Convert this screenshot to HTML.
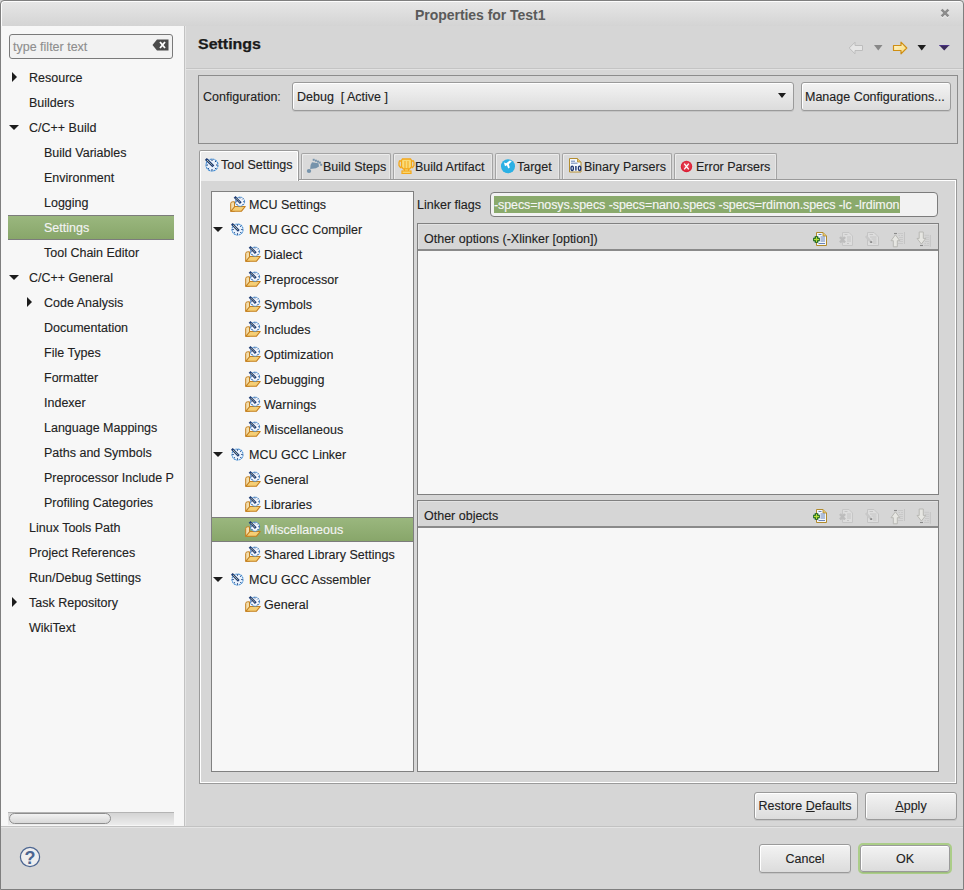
<!DOCTYPE html>
<html><head><meta charset="utf-8">
<style>
*{box-sizing:border-box}
html,body{margin:0;padding:0}
body{width:964px;height:890px;overflow:hidden;position:relative;background:#d6d6d6;font-family:"Liberation Sans",sans-serif;font-size:12.5px;color:#222222;-webkit-text-stroke:0.12px currentColor}
.a{position:absolute}
.t{position:absolute;white-space:pre;line-height:27px;height:27px}
#frame{left:0;top:0;width:964px;height:890px;border:1px solid #7f7f7f;border-radius:4px 4px 0 0;pointer-events:none}
#title{left:1px;top:1px;width:962px;height:25px;background:linear-gradient(#e6e6e6,#d4d4d4);border-radius:3px 3px 0 0;border-top:1px solid #fdfdfd;border-left:1px solid #fdfdfd}
#left{left:1px;top:26px;width:183px;height:800px;background:#f7f7f7}
#leftedge{left:184px;top:26px;width:2px;height:800px;border-left:1px solid #c2c2c2;background:#e4e4e4}
.sel{background:linear-gradient(#9ab77e,#88a66a);border-top:1px solid #7c7c7c;border-bottom:1px solid #7c7c7c}
.arR{position:absolute;width:0;height:0;border-top:5px solid transparent;border-bottom:5px solid transparent;border-left:5px solid #1c1c1c}
.arD{position:absolute;width:0;height:0;border-left:5.5px solid transparent;border-right:5.5px solid transparent;border-top:5.5px solid #1c1c1c}
.btn{position:absolute;border:1px solid #9a9a9a;border-radius:3px;background:linear-gradient(#f3f3f3,#dcdcdc);box-shadow:inset 1px 1px 0 #fff, 0 1px 0 rgba(0,0,0,0.08);text-align:center;white-space:pre}
.tab{position:absolute;top:153px;height:26px;border:1px solid #a4a4a4;border-bottom:none;border-radius:2px 2px 0 0;background:#dadada;box-shadow:inset 1px 1px 0 #ececec, inset -1px 0 0 #e6e6e6}
.tab span{position:absolute;top:3px;line-height:18px;white-space:pre}
.box{position:absolute;border:1px solid #808080}
</style></head><body>

<svg width="0" height="0" style="position:absolute">
<defs>
<symbol id="gear" viewBox="0 0 14 14">
 <circle cx="7" cy="7" r="6" fill="#eaf2fc" stroke="#3d8ad2" stroke-width="1.1" stroke-dasharray="2.2 0.6"/>
 <path d="M7 1.4V3M7 11V12.6M1.4 7H3M11 7H12.6M3.1 10.9l1-1M10.9 10.9l-1-1M10.9 3.1l-1 1" stroke="#1d3c76" stroke-width="1"/>
 <path d="M0.9 0.9L8.4 8.4" stroke="#1d3c76" stroke-width="2.7"/>
 <path d="M2.2 2.2L7.3 7.3" stroke="#f4eaa8" stroke-width="1" stroke-dasharray="1.1 0.5"/>
</symbol>
<symbol id="fgear" viewBox="0 0 16 16">
 <path d="M0.7 15.3V7.6Q0.7 5.8 2.6 5.8H4.5V15.3Z" fill="#f4dfae" stroke="#c47f1e" stroke-width="1"/>
 <path d="M0.8 15.3L4.8 10.5H15.3L11.3 15.3Z" fill="#f6cf75" stroke="#c47f1e" stroke-width="1.1" stroke-linejoin="round"/>
 <circle cx="10" cy="5.7" r="4.6" fill="#f2f6fc" stroke="#3d8ad2" stroke-width="1" stroke-dasharray="1.8 0.6"/>
 <path d="M10 1.3V2.5M14.4 5.7H13.2M5.6 5.7H6.8M6.9 8.8l0.8-0.8M13.1 8.8l-0.8-0.8M13.1 2.6l-0.8 0.8" stroke="#1d3c76" stroke-width="0.9"/>
 <path d="M4.6 0.9L10.8 7.1" stroke="#1d3c76" stroke-width="2.5"/>
 <path d="M5.8 2.1L10 6.3" stroke="#f4eaa8" stroke-width="0.9" stroke-dasharray="1 0.5"/>
</symbol>
<symbol id="doc" viewBox="0 0 14 14">
 <path d="M3.5 0.5H9.5L13.5 4.5V13.5H3.5Z" fill="#f3f6fb" stroke="#b08a2c" stroke-width="1"/>
 <path d="M9.5 0.5V4.5H13.5" fill="#e6c36c" stroke="#b08a2c" stroke-width="0.8"/>
 <path d="M5 3.5H8.5M5.5 6H12M5.5 8H12M5.5 10H12M5 12H12" stroke="#6a85b8" stroke-width="0.9"/>
</symbol>
</defs></svg>
<div id="title" class="a"></div>
<div class="a" style="left:415px;top:7px;font-weight:bold;font-size:14px;letter-spacing:-0.04px;color:#5a5a5a;-webkit-text-stroke:0;line-height:16px;white-space:pre">Properties for Test1</div>
<svg class="a" style="left:939px;top:7px" width="12" height="13"><path d="M2.6 2.6L9.4 9.4M9.4 2.6L2.6 9.4" stroke="#f2f2f2" stroke-width="2.6" transform="translate(0,1)"/><path d="M2.6 2.6L9.4 9.4M9.4 2.6L2.6 9.4" stroke="#8c8c8c" stroke-width="2.6"/></svg>

<div id="left" class="a"></div>
<div id="leftedge" class="a"></div>

<!-- filter box -->
<div class="a" style="left:9px;top:34px;width:164px;height:25px;border:1px solid #7a7a7a;border-radius:3px;background:#f2f2f2"></div>
<div class="t" style="left:13px;top:34px;color:#8e8e8e">type filter text</div>
<svg class="a" style="left:152px;top:39px" width="17" height="12"><path d="M5 0.5H16.5V11.5H5L0.5 6Z" fill="#4a4a4a"/><path d="M8 3L13 9M13 3L8 9" stroke="#fff" stroke-width="1.8"/></svg>

<!-- left tree -->
<div id="ltree">
<div class="a sel" style="left:8px;top:215px;width:166px;height:25px"></div>
<div class="arR" style="left:12px;top:72px"></div>
<div class="t" style="left:29px;top:65px">Resource</div>
<div class="t" style="left:29px;top:90px">Builders</div>
<div class="arD" style="left:9px;top:125px"></div>
<div class="t" style="left:29px;top:115px">C/C++ Build</div>
<div class="t" style="left:44px;top:140px">Build Variables</div>
<div class="t" style="left:44px;top:165px">Environment</div>
<div class="t" style="left:44px;top:190px">Logging</div>
<div class="t" style="left:44px;top:215px;color:#f4f4f4">Settings</div>
<div class="t" style="left:44px;top:240px">Tool Chain Editor</div>
<div class="arD" style="left:9px;top:275px"></div>
<div class="t" style="left:29px;top:265px">C/C++ General</div>
<div class="arR" style="left:27px;top:297px"></div>
<div class="t" style="left:44px;top:290px">Code Analysis</div>
<div class="t" style="left:44px;top:315px">Documentation</div>
<div class="t" style="left:44px;top:340px">File Types</div>
<div class="t" style="left:44px;top:365px">Formatter</div>
<div class="t" style="left:44px;top:390px">Indexer</div>
<div class="t" style="left:44px;top:415px">Language Mappings</div>
<div class="t" style="left:44px;top:440px">Paths and Symbols</div>
<div class="t" style="left:44px;top:465px;width:130px;overflow:hidden">Preprocessor Include Paths</div>
<div class="t" style="left:44px;top:490px">Profiling Categories</div>
<div class="t" style="left:29px;top:515px">Linux Tools Path</div>
<div class="t" style="left:29px;top:540px">Project References</div>
<div class="t" style="left:29px;top:565px">Run/Debug Settings</div>
<div class="arR" style="left:12px;top:597px"></div>
<div class="t" style="left:29px;top:590px">Task Repository</div>
<div class="t" style="left:29px;top:615px">WikiText</div>
</div>

<!-- left scrollbar -->
<div class="a" style="left:8px;top:812px;width:166px;height:13px;border-top:1px solid #b4b4b4;background:linear-gradient(#d4d4d4,#ececec)"></div>
<div class="a" style="left:9px;top:813px;width:102px;height:11px;border:1px solid #8e8e8e;border-radius:6px;background:linear-gradient(#f2f2f2,#d8d8d8)"></div>

<!-- bottom separator -->
<div class="a" style="left:1px;top:826px;width:962px;height:1px;background:#c2c2c2"></div>
<div class="a" style="left:1px;top:827px;width:962px;height:1px;background:#e4e4e4"></div>

<!-- right header -->
<div class="a" style="left:198px;top:34px;font-weight:bold;font-size:14px;line-height:20px;color:#1a1a1a;transform:scaleX(1.14);transform-origin:0 0;-webkit-text-stroke:0.25px #1a1a1a">Settings</div>
<div class="a" style="left:186px;top:68px;width:777px;height:1px;background:#c4c4c4"></div>
<div class="a" style="left:186px;top:69px;width:777px;height:1px;background:#e3e3e3"></div>

<!-- nav arrows -->
<svg class="a" style="left:848px;top:41px" width="16" height="14" viewBox="0 0 16 14"><path d="M1.2 7L7 1.2V4.5H14.5V9.5H7V12.8Z" fill="#e6e6e6" stroke="#bdbdbd" stroke-width="1" stroke-linejoin="round"/></svg>
<svg class="a" style="left:874px;top:45px" width="9" height="6" viewBox="0 0 9 6"><path d="M0 0H8.5L4.25 5.5Z" fill="#888"/></svg>
<svg class="a" style="left:892px;top:41px" width="16" height="14" viewBox="0 0 16 14"><defs><linearGradient id="yg" x1="0" y1="0" x2="1" y2="1"><stop offset="0" stop-color="#fff8d8"/><stop offset="1" stop-color="#f8d870"/></linearGradient></defs><path d="M14.8 7L9 1.2V4.5H1.5V9.5H9V12.8Z" fill="url(#yg)" stroke="#cf8e12" stroke-width="1.2" stroke-linejoin="round"/></svg>
<svg class="a" style="left:917px;top:45px" width="10" height="6" viewBox="0 0 10 6"><path d="M0.5 0H9L4.75 5.5Z" fill="#1e1e1e"/></svg>
<svg class="a" style="left:939px;top:45px" width="11" height="6" viewBox="0 0 11 6"><path d="M0 0H10.5L5.25 5.5Z" fill="#3a2a5a"/><path d="M0 0H10.5" stroke="#5a3ab0" stroke-width="1"/></svg>
<!-- config group -->
<div class="box" style="left:198px;top:75px;width:760px;height:69px;border-color:#8c8c8c"></div>
<div class="t" style="left:203px;top:84px">Configuration:</div>
<div class="btn" style="left:292px;top:82px;width:502px;height:29px"></div>
<div class="t" style="left:297px;top:84px">Debug  [ Active ]</div>
<div class="arD" style="left:778px;top:93px;border-left-width:4.6px;border-right-width:4.6px;border-top-width:5.8px"></div>
<div class="btn" style="left:801px;top:82px;width:150px;height:29px"></div>
<div class="t" style="left:805px;top:84px">Manage Configurations...</div>

<!-- tabs -->
<div class="a" style="left:199px;top:179px;width:758px;height:605px;border:1px solid #9a9a9a;box-shadow:inset 1px 1px 0 #fff, inset -1px -1px 0 #fff"></div>
<div class="tab" style="left:301px;width:90px"></div>
<div class="tab" style="left:393px;width:100px"></div>
<div class="tab" style="left:495px;width:65px"></div>
<div class="tab" style="left:562px;width:110px"></div>
<div class="tab" style="left:674px;width:103px"></div>
<div class="a" style="left:199px;top:150px;width:100px;height:31px;border:1px solid #9a9a9a;border-bottom:none;border-radius:2px 2px 0 0;background:#ececec;box-shadow:inset 1px 1px 0 #fff, inset -1px 0 0 #fff"></div>
<svg class="a" style="left:205px;top:158px" width="14" height="14"><use href="#gear"/></svg>
<div class="t" style="left:221px;top:152px">Tool Settings</div>
<svg class="a" style="left:306px;top:158px" width="17" height="16" viewBox="0 0 17 16">
 <g fill="#7693ab"><rect x="6.7" y="0.8" width="2" height="2"/><rect x="8.9" y="1.7" width="2" height="2"/><rect x="11" y="2.6" width="2" height="2"/><rect x="12.9" y="3.6" width="2" height="2"/><rect x="14.2" y="5.8" width="2" height="2"/>
 <path d="M6 4.2L12.5 5.3L13 8.5L10 10.2L4.2 11L4.6 7Z"/><ellipse cx="3" cy="13" rx="2.2" ry="1.9"/></g></svg>
<div class="t" style="left:323px;top:154px">Build Steps</div>
<svg class="a" style="left:398px;top:158px" width="17" height="16" viewBox="0 0 17 16">
 <path d="M4.5 1H12.5L13.5 2.5V9L11.5 11H5.5L3.5 9V2.5Z" fill="#f9dc7a" stroke="#f3a71a" stroke-width="1.3"/>
 <path d="M3.5 3H1.5L1 4.5V7.5L2.5 9.5H3.5M13.5 3H15.5L16 4.5V7.5L14.5 9.5H13.5" fill="none" stroke="#f3a71a" stroke-width="1.3"/>
 <path d="M7 3V10M10 3V10" stroke="#f3a71a" stroke-width="1"/>
 <rect x="6.5" y="11" width="4" height="2.5" fill="#f9dc7a" stroke="#f3a71a" stroke-width="1"/>
 <rect x="4" y="13" width="9" height="2.5" fill="#f9dc7a" stroke="#f3a71a" stroke-width="1.2"/></svg>
<div class="t" style="left:415px;top:154px">Build Artifact</div>
<svg class="a" style="left:500px;top:158px" width="16" height="16" viewBox="0 0 16 16">
 <circle cx="8" cy="8.2" r="7" fill="#2ab0e4"/>
 <path d="M4 4.6L6.2 5.2L9.8 2.6L11.8 3.2L8.8 6.2L9.8 9.6L8.3 10.6L6.9 7.3L5 8.2L4.5 6.6Z" fill="#fff"/></svg>
<div class="t" style="left:517px;top:154px">Target</div>
<svg class="a" style="left:568px;top:157px" width="16" height="16" viewBox="0 0 16 16">
 <path d="M1.5 1.5H9.5L13 5V15H1.5Z" fill="#f4f7fc" stroke="#b38d30" stroke-width="1"/>
 <path d="M9.5 1.5V5H13" fill="#e7c46a" stroke="#b38d30" stroke-width="0.8"/>
 <path d="M3 4.2H7M3 6.2H9.5" stroke="#5a78b0" stroke-width="0.9"/>
 <g fill="none" stroke="#1c3470" stroke-width="1.3"><ellipse cx="4.2" cy="11.3" rx="1.2" ry="2.2"/><ellipse cx="11.6" cy="11.3" rx="1.2" ry="2.2"/></g><rect x="7.2" y="9" width="1.4" height="4.6" fill="#1c3470"/></svg>
<div class="t" style="left:584px;top:154px">Binary Parsers</div>
<svg class="a" style="left:680px;top:160px" width="13" height="13" viewBox="0 0 13 13">
 <defs><radialGradient id="rg" cx="0.5" cy="0.45" r="0.55"><stop offset="0" stop-color="#ec5a68"/><stop offset="1" stop-color="#d9172f"/></radialGradient></defs><circle cx="6.5" cy="6.5" r="5.7" fill="url(#rg)"/>
 <path d="M4.2 3.6L8.8 9.4M8.8 3.6L4.2 9.4" stroke="#fff" stroke-width="1.3"/></svg>
<div class="t" style="left:696px;top:154px">Error Parsers</div>

<!-- inner tree -->
<div class="box" style="left:211px;top:191px;width:203px;height:581px;background:#f7f7f7"></div>
<div class="a sel" style="left:212px;top:517px;width:201px;height:25px"></div>
<svg class="a" style="left:230px;top:196px" width="16" height="16"><use href="#fgear"/></svg>
<div class="t" style="left:249px;top:192px">MCU Settings</div>
<div class="arD" style="left:213px;top:227px"></div>
<svg class="a" style="left:231px;top:223px" width="13" height="13"><use href="#gear"/></svg>
<div class="t" style="left:249px;top:217px">MCU GCC Compiler</div>
<svg class="a" style="left:245px;top:246px" width="16" height="16"><use href="#fgear"/></svg>
<div class="t" style="left:264px;top:242px">Dialect</div>
<svg class="a" style="left:245px;top:271px" width="16" height="16"><use href="#fgear"/></svg>
<div class="t" style="left:264px;top:267px">Preprocessor</div>
<svg class="a" style="left:245px;top:296px" width="16" height="16"><use href="#fgear"/></svg>
<div class="t" style="left:264px;top:292px">Symbols</div>
<svg class="a" style="left:245px;top:321px" width="16" height="16"><use href="#fgear"/></svg>
<div class="t" style="left:264px;top:317px">Includes</div>
<svg class="a" style="left:245px;top:346px" width="16" height="16"><use href="#fgear"/></svg>
<div class="t" style="left:264px;top:342px">Optimization</div>
<svg class="a" style="left:245px;top:371px" width="16" height="16"><use href="#fgear"/></svg>
<div class="t" style="left:264px;top:367px">Debugging</div>
<svg class="a" style="left:245px;top:396px" width="16" height="16"><use href="#fgear"/></svg>
<div class="t" style="left:264px;top:392px">Warnings</div>
<svg class="a" style="left:245px;top:421px" width="16" height="16"><use href="#fgear"/></svg>
<div class="t" style="left:264px;top:417px">Miscellaneous</div>
<div class="arD" style="left:213px;top:452px"></div>
<svg class="a" style="left:231px;top:448px" width="13" height="13"><use href="#gear"/></svg>
<div class="t" style="left:249px;top:442px">MCU GCC Linker</div>
<svg class="a" style="left:245px;top:471px" width="16" height="16"><use href="#fgear"/></svg>
<div class="t" style="left:264px;top:467px">General</div>
<svg class="a" style="left:245px;top:496px" width="16" height="16"><use href="#fgear"/></svg>
<div class="t" style="left:264px;top:492px">Libraries</div>
<svg class="a" style="left:245px;top:521px" width="16" height="16"><use href="#fgear"/></svg>
<div class="t" style="left:264px;top:517px;color:#f4f4f4">Miscellaneous</div>
<svg class="a" style="left:245px;top:546px" width="16" height="16"><use href="#fgear"/></svg>
<div class="t" style="left:264px;top:542px">Shared Library Settings</div>
<div class="arD" style="left:213px;top:577px"></div>
<svg class="a" style="left:231px;top:573px" width="13" height="13"><use href="#gear"/></svg>
<div class="t" style="left:249px;top:567px">MCU GCC Assembler</div>
<svg class="a" style="left:245px;top:596px" width="16" height="16"><use href="#fgear"/></svg>
<div class="t" style="left:264px;top:592px">General</div>


<!-- linker flags -->
<div class="t" style="left:417px;top:192px">Linker flags</div>
<div class="a" style="left:490px;top:192px;width:448px;height:25px;border:1px solid #7c7c7c;border-radius:4px;background:#f2f2f2"></div>
<div class="a" style="left:494px;top:196px;width:406px;height:17px;background:#8aaa6c"></div>
<div class="t" style="left:494px;top:192px;color:#f6f6f6;letter-spacing:-0.09px">-specs=nosys.specs -specs=nano.specs -specs=rdimon.specs -lc -lrdimon</div>

<!-- other options -->
<div class="box" style="left:417px;top:223px;width:522px;height:272px;background:#f7f7f7"></div>
<div class="a" style="left:418px;top:224px;width:520px;height:27px;background:#d6d6d6;border-bottom:2px solid #8a8a8a;box-shadow:inset 1px 1px 0 #e2e2e2"></div>
<div class="t" style="left:424px;top:226px">Other options (-Xlinker [option])</div>
<svg class="a" style="left:812px;top:231px" width="16" height="16" viewBox="0 0 16 16">
 <path d="M4.5 1.5H11L14.5 5V14.5H4.5Z" fill="#f3f6fb" stroke="#b08a2c" stroke-width="1"/>
 <path d="M11 1.5V5H14.5" fill="#e6c36c" stroke="#b08a2c" stroke-width="0.8"/>
 <path d="M6.5 3.5H9.5M8.5 6H13M8.5 8H13M8.5 10H13M6.5 12.5H13" stroke="#6a85b8" stroke-width="1"/>
 <path d="M4.5 5.2V11.8M1.2 8.5H7.8" stroke="#0c5a18" stroke-width="3.6"/>
 <path d="M4.5 6V11M2 8.5H7" stroke="#b5dc3a" stroke-width="1.3"/>
</svg>
<svg class="a" style="left:838px;top:231px" width="16" height="16" viewBox="0 0 16 16">
 <path d="M4.5 1.5H11L14.5 5V14.5H4.5Z" fill="#dddddd" stroke="#c6c6c6" stroke-width="1"/>
 <path d="M6.5 3.5H9.5M9 6H13M9 8H13M9 10H13M9 12.5H11" stroke="#c4c4c4" stroke-width="1"/>
 <path d="M2 6L7 11.5M7 6L2 11.5" stroke="#bdbdbd" stroke-width="2.6"/>
</svg>
<svg class="a" style="left:865px;top:231px" width="16" height="16" viewBox="0 0 16 16">
 <path d="M2.5 1.5H9L13.5 6V14.5H2.5Z" fill="#dddddd" stroke="#c4c4c4" stroke-width="1"/>
 <path d="M4.5 3.5H8M5 6H11.5M6.5 8H11.5M8 10H11.5M8 12H11.5" stroke="#c4c4c4" stroke-width="1"/>
 <path d="M0.8 5L6 11" stroke="#c8c8c8" stroke-width="2.6"/>
 <rect x="5.2" y="10.2" width="2" height="1.8" fill="#8a8a8a"/>
</svg>
<svg class="a" style="left:890px;top:231px" width="16" height="17" viewBox="0 0 16 17">
 <path d="M4 2.5H7" stroke="#8a8a8a" stroke-width="1.1"/>
 <path d="M8 2.5H13M8.5 4.5H10M11 4.5H13M9 6.5H13M9.5 8.5H13M9.5 10.5H13M8 12.5H13" stroke="#c6c6c6" stroke-width="0.9"/>
 <path d="M14.5 1V13" stroke="#c4c4c4" stroke-width="1"/>
 <path d="M5.4 3.8L1 9.7H3.3V15.8H7.3V9.7H9.8Z" fill="#e6e6e2" stroke="#b8b8b4" stroke-width="1" stroke-linejoin="round"/>
</svg>
<svg class="a" style="left:916px;top:231px" width="16" height="17" viewBox="0 0 16 17">
 <path d="M4 14.5H7" stroke="#8a8a8a" stroke-width="1.1"/>
 <path d="M8.5 4.3H13M9 6.3H13M9.5 8.4H13M9 10.5H13M8.5 12.6H10M11 12.6H13M8 14.5H13" stroke="#c6c6c6" stroke-width="0.9"/>
 <path d="M14.3 4V15.8" stroke="#c4c4c4" stroke-width="1"/>
 <path d="M5.4 13L9.8 7.4H7.3V1H3.2V7.4H1Z" fill="#e6e6e2" stroke="#b8b8b4" stroke-width="1" stroke-linejoin="round"/>
</svg>


<div class="box" style="left:417px;top:500px;width:522px;height:272px;background:#f7f7f7"></div>
<div class="a" style="left:418px;top:501px;width:520px;height:27px;background:#d6d6d6;border-bottom:2px solid #8a8a8a;box-shadow:inset 1px 1px 0 #e2e2e2"></div>
<div class="t" style="left:424px;top:503px">Other objects</div>
<svg class="a" style="left:812px;top:508px" width="16" height="16" viewBox="0 0 16 16">
 <path d="M4.5 1.5H11L14.5 5V14.5H4.5Z" fill="#f3f6fb" stroke="#b08a2c" stroke-width="1"/>
 <path d="M11 1.5V5H14.5" fill="#e6c36c" stroke="#b08a2c" stroke-width="0.8"/>
 <path d="M6.5 3.5H9.5M8.5 6H13M8.5 8H13M8.5 10H13M6.5 12.5H13" stroke="#6a85b8" stroke-width="1"/>
 <path d="M4.5 5.2V11.8M1.2 8.5H7.8" stroke="#0c5a18" stroke-width="3.6"/>
 <path d="M4.5 6V11M2 8.5H7" stroke="#b5dc3a" stroke-width="1.3"/>
</svg>
<svg class="a" style="left:838px;top:508px" width="16" height="16" viewBox="0 0 16 16">
 <path d="M4.5 1.5H11L14.5 5V14.5H4.5Z" fill="#dddddd" stroke="#c6c6c6" stroke-width="1"/>
 <path d="M6.5 3.5H9.5M9 6H13M9 8H13M9 10H13M9 12.5H11" stroke="#c4c4c4" stroke-width="1"/>
 <path d="M2 6L7 11.5M7 6L2 11.5" stroke="#bdbdbd" stroke-width="2.6"/>
</svg>
<svg class="a" style="left:865px;top:508px" width="16" height="16" viewBox="0 0 16 16">
 <path d="M2.5 1.5H9L13.5 6V14.5H2.5Z" fill="#dddddd" stroke="#c4c4c4" stroke-width="1"/>
 <path d="M4.5 3.5H8M5 6H11.5M6.5 8H11.5M8 10H11.5M8 12H11.5" stroke="#c4c4c4" stroke-width="1"/>
 <path d="M0.8 5L6 11" stroke="#c8c8c8" stroke-width="2.6"/>
 <rect x="5.2" y="10.2" width="2" height="1.8" fill="#8a8a8a"/>
</svg>
<svg class="a" style="left:890px;top:508px" width="16" height="17" viewBox="0 0 16 17">
 <path d="M4 2.5H7" stroke="#8a8a8a" stroke-width="1.1"/>
 <path d="M8 2.5H13M8.5 4.5H10M11 4.5H13M9 6.5H13M9.5 8.5H13M9.5 10.5H13M8 12.5H13" stroke="#c6c6c6" stroke-width="0.9"/>
 <path d="M14.5 1V13" stroke="#c4c4c4" stroke-width="1"/>
 <path d="M5.4 3.8L1 9.7H3.3V15.8H7.3V9.7H9.8Z" fill="#e6e6e2" stroke="#b8b8b4" stroke-width="1" stroke-linejoin="round"/>
</svg>
<svg class="a" style="left:916px;top:508px" width="16" height="17" viewBox="0 0 16 17">
 <path d="M4 14.5H7" stroke="#8a8a8a" stroke-width="1.1"/>
 <path d="M8.5 4.3H13M9 6.3H13M9.5 8.4H13M9 10.5H13M8.5 12.6H10M11 12.6H13M8 14.5H13" stroke="#c6c6c6" stroke-width="0.9"/>
 <path d="M14.3 4V15.8" stroke="#c4c4c4" stroke-width="1"/>
 <path d="M5.4 13L9.8 7.4H7.3V1H3.2V7.4H1Z" fill="#e6e6e2" stroke="#b8b8b4" stroke-width="1" stroke-linejoin="round"/>
</svg>


<!-- buttons -->
<div class="btn" style="left:754px;top:792px;width:104px;height:28px;line-height:26px;padding-right:2px">Restore <u>D</u>efaults</div>
<div class="btn" style="left:865px;top:792px;width:92px;height:28px;line-height:26px"><u>A</u>pply</div>
<div class="btn" style="left:759px;top:844px;width:92px;height:29px;line-height:29px">Cancel</div>
<div class="a" style="left:858px;top:843px;width:94px;height:31px;border:2px solid #abcd88;border-radius:5px"></div>
<div class="btn" style="left:860px;top:845px;width:90px;height:27px;line-height:26px;padding-left:0px">OK</div>

<!-- help icon -->
<svg class="a" style="left:19px;top:846px" width="23" height="23"><circle cx="11" cy="11" r="9.6" fill="#eeeeef" stroke="#4b6591" stroke-width="1.2"/><text x="11" y="17.6" text-anchor="middle" font-family="Liberation Sans" font-weight="bold" font-size="18" fill="#4b6591">?</text></svg>

<div id="frame" class="a"></div>
</body></html>
